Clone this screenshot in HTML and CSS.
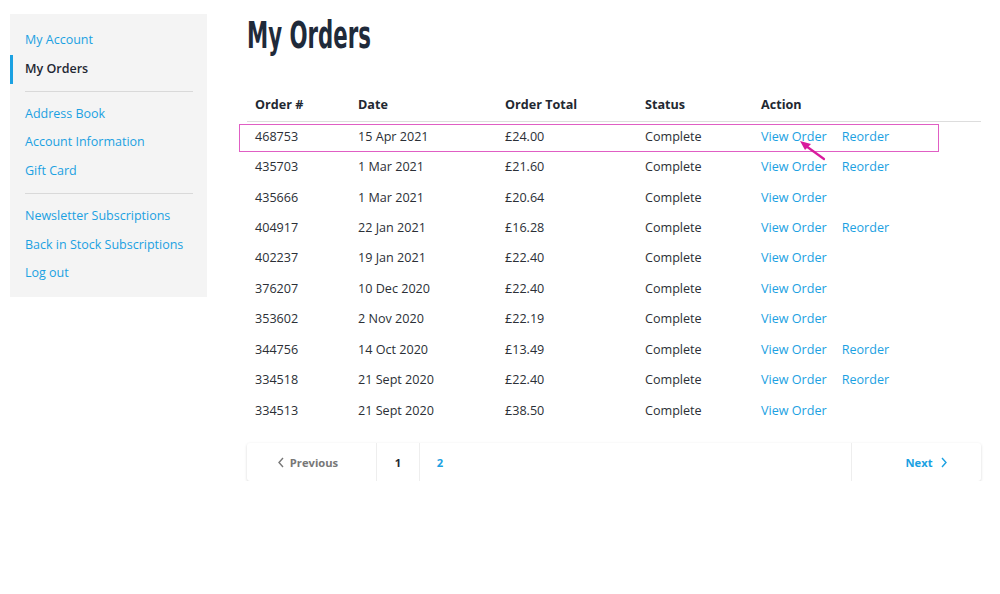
FILE: index.html
```html
<!DOCTYPE html>
<html lang="en">
<head>
<meta charset="utf-8">
<title>My Orders</title>
<link rel="stylesheet" href="styles.css">
</head>
<body>
<div class="page">
  <aside class="sidebar">
    <ul class="nav">
      <li><a href="#">My Account</a></li>
      <li class="active"><span>My Orders</span></li>
    </ul>
    <hr class="divider">
    <ul class="nav">
      <li><a href="#">Address Book</a></li>
      <li><a href="#">Account Information</a></li>
      <li><a href="#">Gift Card</a></li>
    </ul>
    <hr class="divider">
    <ul class="nav">
      <li><a href="#">Newsletter Subscriptions</a></li>
      <li><a href="#">Back in Stock Subscriptions</a></li>
      <li><a href="#">Log out</a></li>
    </ul>
  </aside>
  <main class="main">
    <h1 class="title">My Orders</h1>
    <div class="table-wrap">
      <table class="orders">
        <thead>
          <tr><th class="c1">Order #</th><th class="c2">Date</th><th class="c3">Order Total</th><th class="c4">Status</th><th>Action</th></tr>
        </thead>
        <tbody>
          <tr><td>468753</td><td>15 Apr 2021</td><td>£24.00</td><td>Complete</td><td><a href="#">View Order</a><a href="#" class="re">Reorder</a></td></tr>
          <tr><td>435703</td><td>1 Mar 2021</td><td>£21.60</td><td>Complete</td><td><a href="#">View Order</a><a href="#" class="re">Reorder</a></td></tr>
          <tr><td>435666</td><td>1 Mar 2021</td><td>£20.64</td><td>Complete</td><td><a href="#">View Order</a></td></tr>
          <tr><td>404917</td><td>22 Jan 2021</td><td>£16.28</td><td>Complete</td><td><a href="#">View Order</a><a href="#" class="re">Reorder</a></td></tr>
          <tr><td>402237</td><td>19 Jan 2021</td><td>£22.40</td><td>Complete</td><td><a href="#">View Order</a></td></tr>
          <tr><td>376207</td><td>10 Dec 2020</td><td>£22.40</td><td>Complete</td><td><a href="#">View Order</a></td></tr>
          <tr><td>353602</td><td>2 Nov 2020</td><td>£22.19</td><td>Complete</td><td><a href="#">View Order</a></td></tr>
          <tr><td>344756</td><td>14 Oct 2020</td><td>£13.49</td><td>Complete</td><td><a href="#">View Order</a><a href="#" class="re">Reorder</a></td></tr>
          <tr><td>334518</td><td>21 Sept 2020</td><td>£22.40</td><td>Complete</td><td><a href="#">View Order</a><a href="#" class="re">Reorder</a></td></tr>
          <tr><td>334513</td><td>21 Sept 2020</td><td>£38.50</td><td>Complete</td><td><a href="#">View Order</a></td></tr>
        </tbody>
      </table>
      <div class="highlight"></div>
      <svg class="pointer" width="30" height="24" viewBox="0 0 30 24">
        <line x1="27" y1="21" x2="9" y2="8" stroke="#d81b9c" stroke-width="2.2" stroke-linecap="round"/>
        <polygon points="3,3 14,6 8,12" fill="#d81b9c"/>
      </svg>
    </div>
    <nav class="pager">
      <a href="#" class="prev"><svg width="8" height="11" viewBox="0 0 8 11"><path d="M6 1 L2 5.5 L6 10" fill="none" stroke="#777" stroke-width="1.4"/></svg>Previous</a>
      <span class="page-num current">1</span>
      <a href="#" class="page-num link">2</a>
      <span class="spacer"></span>
      <a href="#" class="next">Next<svg width="8" height="11" viewBox="0 0 8 11"><path d="M2 1 L6 5.5 L2 10" fill="none" stroke="#1ba1e2" stroke-width="1.4"/></svg></a>
    </nav>
  </main>
</div>
</body>
</html>
```
FILE: styles.css
```css
* { box-sizing: border-box; }
html, body { margin: 0; padding: 0; background: #fff; }
body {
  font-family: "Open Sans", "Noto Sans", sans-serif;
  font-size: 12.6px;
  color: #2b2f36;
}
a { color: #1ba1e2; text-decoration: none; }

.page {
  display: flex;
  align-items: flex-start;
  gap: 40px;
  padding: 14px 0 0 10px;
}

.sidebar {
  width: 197px;
  background: #f4f4f4;
  padding: 12px 0 9px;
  flex: none;
  font-size: 12.5px;
}
.nav { list-style: none; margin: 0; padding: 0; }
.nav li {
  line-height: 28.75px;
  height: 28.75px;
  padding-left: 15px;
  white-space: nowrap;
}
.nav li.active {
  border-left: 3px solid #1ba1e2;
  padding-left: 12px;
  font-weight: 600;
  color: #1f2833;
}
.divider {
  border: 0;
  border-top: 1px solid #d9d9d9;
  margin: 7px 14px 8px 15px;
  height: 0;
}

.main {
  width: 734px;
  flex: none;
}
.title {
  font-family: "Liberation Sans Narrow", "DejaVu Sans Condensed", "Liberation Sans", sans-serif;
  font-weight: 700;
  font-size: 37px;
  line-height: 44px;
  margin: 0;
  color: #1f2a3a;
  transform: scaleX(0.64);
  transform-origin: left center;
}

.table-wrap {
  position: relative;
  margin-top: 31px;
}
.orders {
  width: 100%;
  border-collapse: collapse;
}
.orders th {
  text-align: left;
  font-weight: 700;
  color: #222831;
  height: 32px;
  padding: 0 8px;
  border-bottom: 1px solid #dddddd;
  vertical-align: middle;
}
.orders th.c1 { width: 103px; }
.orders th.c2 { width: 147px; }
.orders th.c3 { width: 140px; }
.orders th.c4 { width: 116px; }
.orders td {
  height: 30.45px;
  padding: 0 8px;
  vertical-align: middle;
  white-space: nowrap;
  color: #2b2f36;
}
.orders td .re { margin-left: 15px; }

.highlight {
  position: absolute;
  left: -8px;
  top: 35px;
  width: 700px;
  height: 28px;
  border: 1.5px solid #e05ec4;
  pointer-events: none;
}
.pointer {
  position: absolute;
  left: 550px;
  top: 49px;
}

.pager {
  display: flex;
  align-items: stretch;
  height: 38px;
  margin-top: 18px;
  background: #fff;
  border-radius: 3px;
  box-shadow: 0 1px 3px rgba(0,0,0,0.16);
  font-weight: 700;
  font-size: 11.2px;
}
.pager .prev {
  width: 130px;
  display: flex;
  align-items: center;
  justify-content: center;
  gap: 5px;
  padding-right: 8px;
  color: #777;
  border-right: 1px solid #eeeeee;
}
.pager .page-num {
  width: 43px;
  display: flex;
  align-items: center;
  justify-content: center;
}
.pager .current { color: #1f2833; border-right: 1px solid #eeeeee; }
.pager .link { color: #1ba1e2; width: 40px; }
.pager .spacer { flex: 1; }
.pager .next {
  width: 130px;
  display: flex;
  align-items: center;
  justify-content: center;
  gap: 7px;
  padding-left: 20px;
  color: #1ba1e2;
  border-left: 1px solid #eeeeee;
}
```
